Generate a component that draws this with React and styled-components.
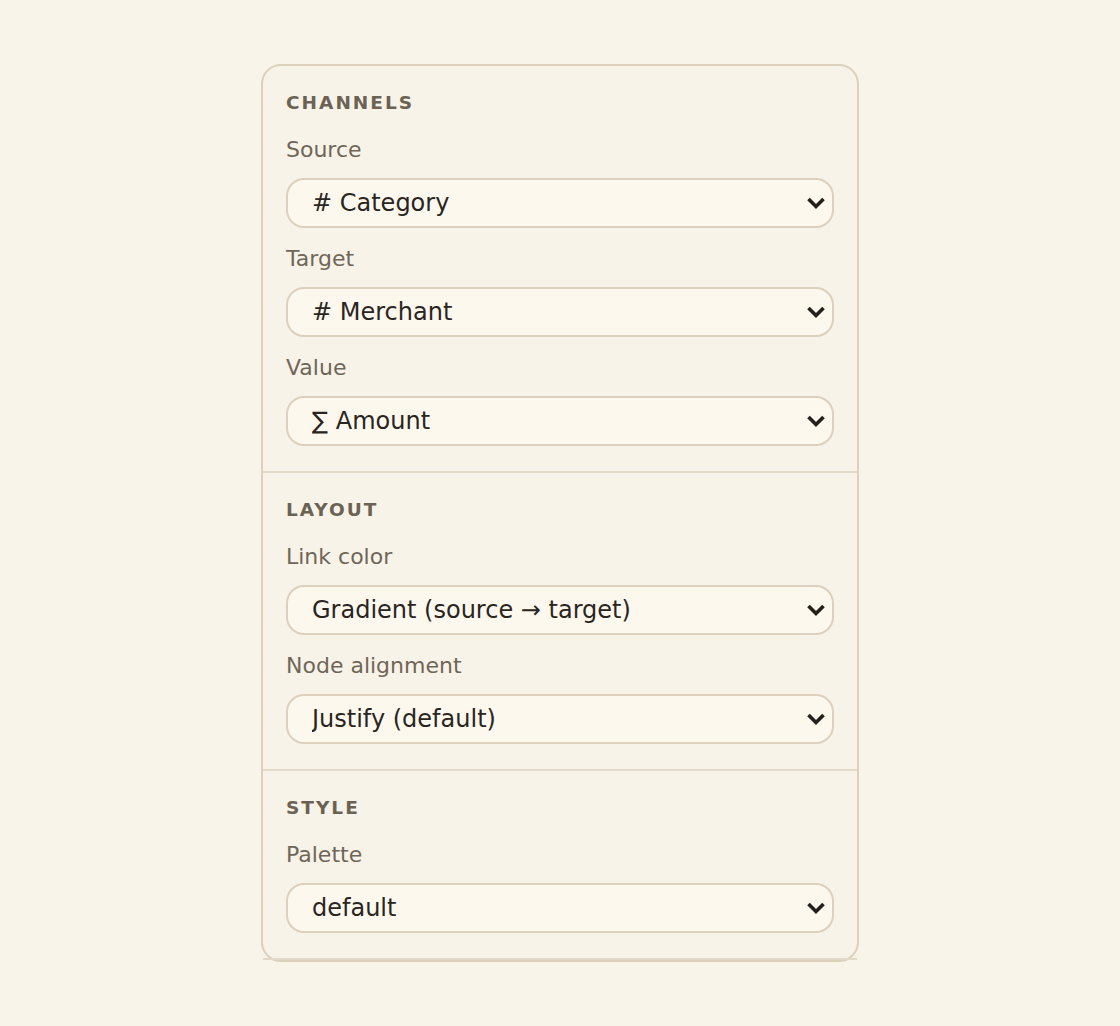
import React from 'react';
import styled, { createGlobalStyle } from 'styled-components';

const GlobalStyle = createGlobalStyle`
  html, body {
    margin: 0;
    padding: 0;
    background: #f9f4ea;
    font-family: "DejaVu Sans", Verdana, sans-serif;
  }
`;

const Page = styled.div`
  display: flex;
  justify-content: center;
  padding-top: 64px;
  min-height: 1026px;
  box-sizing: border-box;
`;

const Panel = styled.div`
  width: 598px;
  box-sizing: border-box;
  background: #f8f3e9;
  border: 2px solid #ddd1be;
  border-radius: 20px;
  align-self: flex-start;
`;

const Section = styled.section`
  padding: 25px 23px 25px;
  border-bottom: 2px solid #e3d9c8;
`;

const Heading = styled.h3`
  margin: 0 0 22px;
  font-size: 18.5px;
  line-height: 24px;
  font-weight: 700;
  letter-spacing: 2px;
  text-transform: uppercase;
  color: #6b6254;
`;

const Field = styled.div`
  display: flex;
  flex-direction: column;
  gap: 15px;
  & + & {
    margin-top: 18px;
  }
`;

const Label = styled.label`
  font-size: 22px;
  line-height: 26px;
  color: #6f6658;
`;

const SelectWrap = styled.div`
  position: relative;
`;

const Select = styled.select`
  appearance: none;
  -webkit-appearance: none;
  width: 100%;
  height: 50px;
  box-sizing: border-box;
  padding: 0 44px 0 24px;
  font-family: "DejaVu Sans", Verdana, sans-serif;
  font-size: 24px;
  color: #2a2520;
  background: #fdf8ee;
  border: 2px solid #ddd0bc;
  border-radius: 18px;
  outline: none;
`;

const Chevron = styled.svg`
  position: absolute;
  right: 8px;
  top: 50%;
  width: 20px;
  height: 14px;
  margin-top: -7px;
  pointer-events: none;
`;

const sections = [
  {
    title: 'Channels',
    fields: [
      { label: 'Source', options: ['# Category', '# Merchant', '∑ Amount'] },
      { label: 'Target', options: ['# Merchant', '# Category', '∑ Amount'] },
      { label: 'Value', options: ['∑ Amount', '# Category', '# Merchant'] },
    ],
  },
  {
    title: 'Layout',
    fields: [
      { label: 'Link color', options: ['Gradient (source → target)', 'Source', 'Target'] },
      { label: 'Node alignment', options: ['Justify (default)', 'Left', 'Right', 'Center'] },
    ],
  },
  {
    title: 'Style',
    fields: [{ label: 'Palette', options: ['default', 'warm', 'cool'] }],
  },
];

export default function App() {
  return (
    <>
      <GlobalStyle />
      <Page>
        <Panel>
          {sections.map((s) => (
            <Section key={s.title}>
              <Heading>{s.title}</Heading>
              {s.fields.map((f) => (
                <Field key={f.label}>
                  <Label>{f.label}</Label>
                  <SelectWrap>
                    <Select defaultValue={f.options[0]}>
                      {f.options.map((o) => (
                        <option key={o}>{o}</option>
                      ))}
                    </Select>
                    <Chevron viewBox="0 0 20 14">
                      <path d="M2.5 3 L10 10.5 L17.5 3" fill="none" stroke="#231f1b" strokeWidth="3.6" />
                    </Chevron>
                  </SelectWrap>
                </Field>
              ))}
            </Section>
          ))}
        </Panel>
      </Page>
    </>
  );
}
